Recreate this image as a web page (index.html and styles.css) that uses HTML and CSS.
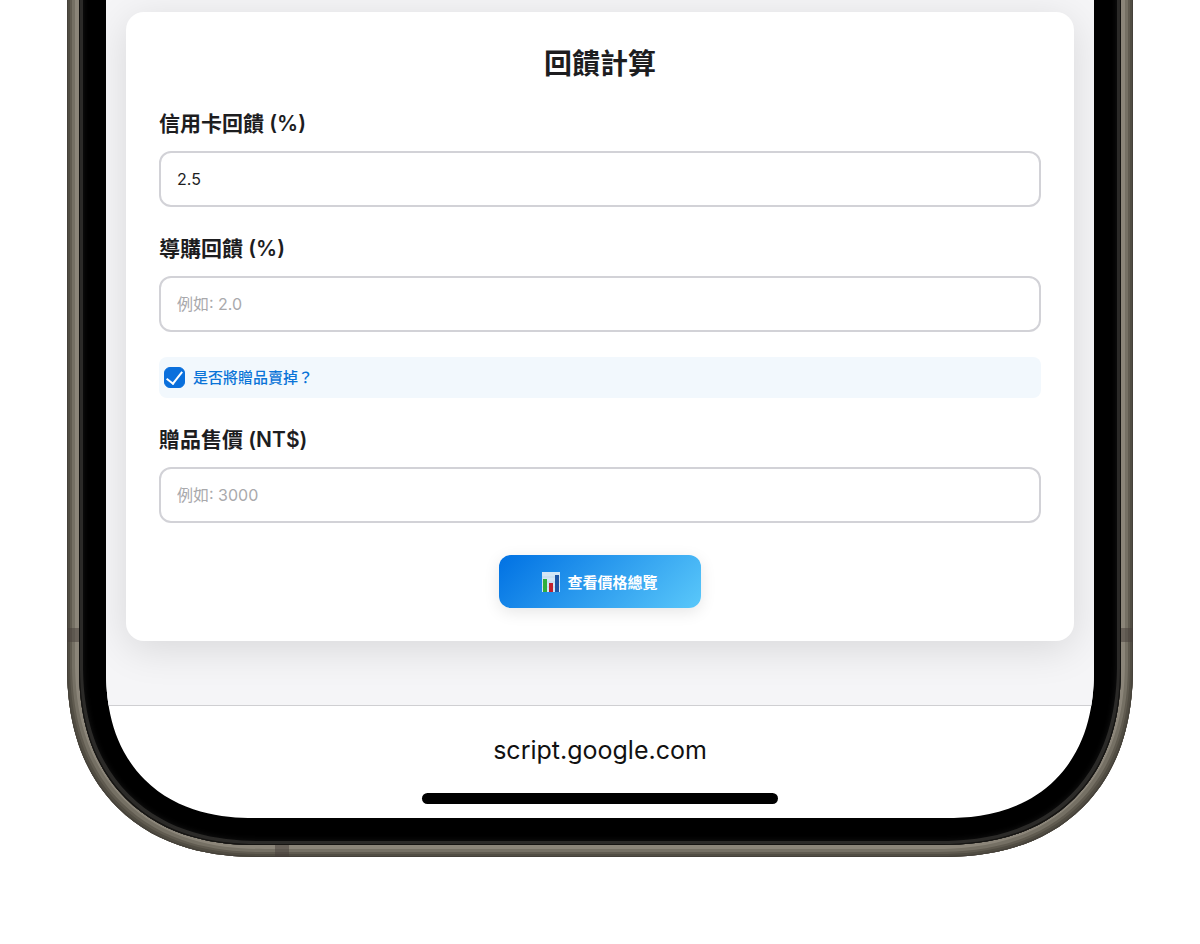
FILE: index.html
```html
<!DOCTYPE html>
<html lang="zh-Hant">
    <head>
        <meta charset="UTF-8">
        <meta name="viewport" content="width=device-width, initial-scale=1">
        <title>回饋計算</title>
        <link rel="stylesheet" href="styles.css">
    </head>
    <body>
        <div class="phone">
            <span class="band band-left"></span>
            <span class="band band-right"></span>
            <span class="band band-bottom"></span>
            <div class="bezel">
                <div class="screen">
                    <main class="page">
                        <form class="card">
                            <h2>回饋計算</h2>

                            <div class="field">
                                <label for="cardRate">信用卡回饋 (%)</label>
                                <input type="text" inputmode="decimal" id="cardRate" value="2.5">
                            </div>

                            <div class="field">
                                <label for="shopRate">導購回饋 (%)</label>
                                <input type="text" inputmode="decimal" id="shopRate" placeholder="例如: 2.0">
                            </div>

                            <div class="check">
                                <input type="checkbox" id="sellGift" checked>
                                <label for="sellGift">是否將贈品賣掉？</label>
                            </div>

                            <div class="field">
                                <label for="giftPrice">贈品售價 (NT$)</label>
                                <input type="text" inputmode="numeric" id="giftPrice" placeholder="例如: 3000">
                            </div>

                            <button type="button" class="btn">
                                <svg width="18" height="20" viewBox="0 0 18 20" aria-hidden="true">
                                    <rect width="18" height="20" fill="#d3e6f6"/>
                                    <path d="M0 5h18M0 10h18M0 15h18" stroke="#c0d8ec" stroke-width="1"/>
                                    <rect x="1" y="7" width="4" height="13" fill="#2fae3c"/>
                                    <rect x="7" y="11" width="4" height="9" fill="#c2202c"/>
                                    <rect x="13" y="3" width="4" height="17" fill="#1d55a5"/>
                                </svg>
                                查看價格總覽
                            </button>
                        </form>
                    </main>

                    <footer class="toolbar">
                        <a href="#">script.google.com</a>
                        <div class="home"></div>
                    </footer>
                </div>
            </div>
        </div>
    </body>
</html>
```

FILE: styles.css
```css
* {
    box-sizing: border-box;
}

body {
    display: flow-root;
    margin: 0;
    background: #fff;
    color: #1d1d1f;
    font-family: Inter, "Noto Sans CJK TC", sans-serif;
}

/* Titanium frame, shaded from the outer edge inwards.
   The top runs off the window so that only the lower part shows. */
.phone {
    position: relative;
    margin: -20px 67px 0;
    padding: 0 12px 12px;
    border-radius: 0 0 174px 174px;
    background: #8b8579;
    box-shadow: inset 0 0 0 1px #45413a, inset 0 0 0 3px #514d43, inset 0 0 0 5px #605b50, inset 0 0 0 8px #757064;
}

/* Antenna bands */
.band {
    position: absolute;
    background: rgba(70, 62, 58, 0.5);
}

.band-left,
.band-right {
    top: 648px;
    width: 12px;
    height: 14px;
}

.band-left {
    left: 0;
}

.band-right {
    right: 0;
}

.band-bottom {
    left: 208px;
    bottom: 0;
    width: 14px;
    height: 12px;
}

.bezel {
    position: relative;
    padding: 0 27px 27px;
    border-radius: 0 0 162px 162px;
    background: #000;
    box-shadow: inset 0 0 0 1px #151412, inset 0 0 0 4px #2b2a28, inset 0 0 6px 4px #161616;
}

.screen {
    overflow: hidden;
    border-radius: 0 0 135px 135px;
    background: #fff;
}

/* Continuous corners */
@supports (corner-shape: superellipse(1.2)) {
    .phone,
    .bezel,
    .screen {
        corner-shape: superellipse(1.2);
    }

    .phone {
        border-radius: 0 0 192px 192px;
    }

    .bezel {
        border-radius: 0 0 179px 179px;
    }

    .screen {
        border-radius: 0 0 148px 148px;
    }
}

.page {
    padding: 32px 20px 64px;
    background: #f5f5f7;
}

/* Calculator card */
.card {
    padding: 33px;
    border-radius: 18px;
    background: #fff;
    box-shadow: 0 8px 40px rgba(0, 0, 0, 0.12);
}

h2 {
    margin: 0 0 24px;
    font-size: 28px;
    line-height: 38px;
    font-weight: 600;
    text-align: center;
}

.field {
    margin-bottom: 25px;
}

.field label {
    display: block;
    padding-top: 1px;
    margin-bottom: 11px;
    font-size: 21px;
    line-height: 32px;
    font-weight: 600;
}

.field input {
    display: block;
    width: 100%;
    height: 56px;
    padding: 0 16px;
    border: 2px solid #d2d2d7;
    border-radius: 12px;
    background: #fff;
    color: #1d1d1f;
    font-family: inherit;
    font-size: 16px;
}

.field input::placeholder {
    color: #a9a9ac;
}

.check {
    display: flex;
    align-items: center;
    gap: 8px;
    height: 41px;
    margin-bottom: 25px;
    padding: 0 5px;
    border-radius: 8px;
    background: #f2f8fd;
}

.check input {
    display: grid;
    place-items: center;
    width: 21px;
    height: 21px;
    margin: 0;
    border-radius: 6px;
    background: #fff;
    border: 1px solid #0a6fdc;
    appearance: none;
}

.check input:checked {
    background: #0a6fdc;
}

.check input:checked::before {
    content: '';
    width: 7px;
    height: 14px;
    margin-bottom: 4px;
    border: solid #fff;
    border-width: 0 2px 2px 0;
    transform: rotate(38deg);
}

.check label {
    color: #0a74d8;
    font-size: 15px;
    line-height: 20px;
    font-weight: 500;
}

.btn {
    display: flex;
    align-items: center;
    justify-content: center;
    gap: 7px;
    min-width: 202px;
    height: 53px;
    margin: 32px auto 0;
    border: none;
    border-radius: 12px;
    background: linear-gradient(135deg, #0071e3, #5ac8fa);
    box-shadow: 0 4px 16px rgba(0, 0, 0, 0.1);
    color: #fff;
    font-family: inherit;
    font-size: 15px;
    font-weight: 600;
    cursor: pointer;
}

/* Browser address bar */
.toolbar {
    display: flex;
    flex-direction: column;
    align-items: center;
    padding: 24px 0 14px;
    border-top: 1px solid #cfcfd2;
}

.toolbar a {
    margin-bottom: 23px;
    color: #111;
    font-size: 25px;
    line-height: 40px;
    text-decoration: none;
}

.home {
    width: 36%;
    height: 11px;
    border-radius: 6px;
    background: #000;
}
```
